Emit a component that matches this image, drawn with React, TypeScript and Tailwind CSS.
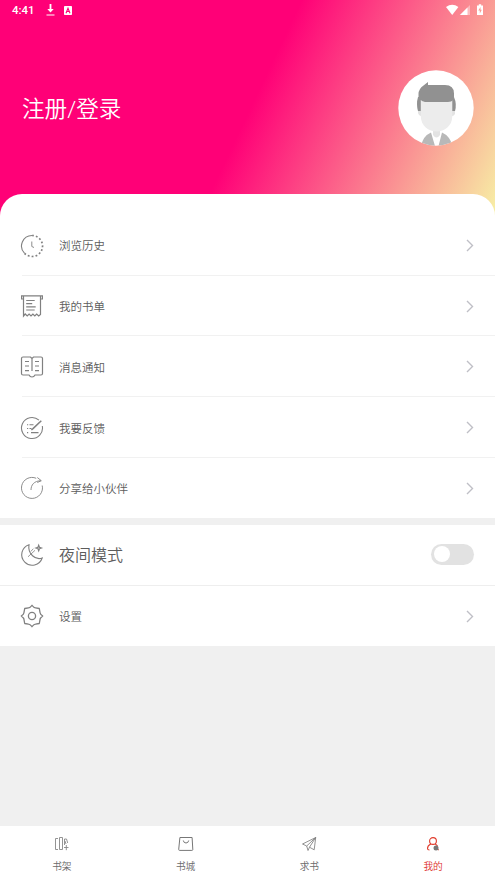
import React from 'react';

const iconProps = {
  width: 24,
  height: 24,
  viewBox: '0 0 24 24',
  fill: 'none',
  stroke: '#808080',
  strokeWidth: 1.1,
};

const HistoryIcon = () => (
  <svg {...iconProps}>
    <path d="M12 1.5A10.5 10.5 0 0 0 4.600 19.400" />
    <path d="M4.600 19.400A10.500 10.500 0 1 0 12 1.500" strokeWidth="1.700" strokeDasharray="1.800 2.100" />
    <path d="M11.800 7.500v5l2.200 1" strokeWidth="0.900" />
  </svg>
);

const ListIcon = () => (
  <svg {...iconProps} strokeWidth={1.2}>
    <path d="M3.500 5H1.600V1.800h20.800V5h-1.900M3.500 2v20l1.700-2 2 2 1.900-2 1.900 2 1.900-2 1.900 2 1.900-2 2 2 1.800-1.500V2" />
    <path d="M6.200 6.500h8.500M6.200 9.700h6M6.200 12.900h9.500M6.200 16h8.500" />
  </svg>
);

const BookIcon = () => (
  <svg {...iconProps} strokeWidth={1.2}>
    <path d="M12 3.500 10.500 2H3Q1.500 2 1.500 3.500v15Q1.500 20 3 20h6q1 2 3 2t3-2h6q1.500 0 1.500-1.500v-15Q22.500 2 21 2h-7.500zM12 3.500V16" />
    <path d="M5 6.500h4M5 11h4M5 15.700h4M15 6.500h4M15 11h4M15 15.700h4" />
  </svg>
);

const FeedbackIcon = () => (
  <svg {...iconProps}>
    <path d="M19 4.200A10.500 10.500 0 1 0 22.300 10" />
    <path d="M21.300 4.700 13 12.600l-1.600 1.400" strokeWidth="1.500" />
    <path d="M7 8.700h1.200M9.500 8.700h4M7 12.500h1.200M9.500 12.500h2M7 16.600h1.200M11 16.600h7.500" />
  </svg>
);

const ShareIcon = () => (
  <svg {...iconProps} strokeWidth={0.9}>
    <path d="M16.200 2.300A10.500 10.500 0 1 0 22.200 9.500" />
    <path d="M11 14C11 9 14 5 20.800 4.700M17.300 1.500l4 3.200-4 1.800" />
  </svg>
);

const MoonIcon = () => (
  <svg {...iconProps}>
    <path d="M9 1.700A10.500 10.500 0 1 0 22.200 15C15.500 17.500 7.500 11 9 1.700z" />
    <path d="m8 13.800 7-6.500M10.800 8.500l2.500-2.800" strokeWidth="0.800" />
    <path d="m18.700 2.400.7 1.900 1.900.7-1.900.7-.7 1.900-.7-1.900-1.900-.7 1.900-.7z" strokeWidth="1.300" />
  </svg>
);

const GearIcon = () => (
  <svg {...iconProps} strokeLinejoin="round" strokeWidth={1.3}>
    <path d="M12 1.300Q14 3.800 15.500 3.800L19.300 4.500 20 8.400Q20 10 22.700 12 20 14 20 15.600L19.300 19.500 15.500 20.200Q14 20.200 12 22.700 10 20.200 8.500 20.200L4.700 19.500 4 15.600Q4 14 1.300 12 4 10 4 8.400L4.700 4.500 8.500 3.800Q10 3.800 12 1.300z" />
    <circle cx="12" cy="12" r="3.600" />
  </svg>
);

const Chevron = () => (
  <svg className="ml-auto" width="8" height="13" viewBox="0 0 8 13" fill="none" stroke="#bfbfc6" strokeWidth="1.400">
    <path d="M1 1l5.500 5.500L1 12" />
  </svg>
);

const Avatar = () => (
  <svg width="76" height="76" viewBox="0 0 76 76">
    <clipPath id="avatar">
      <circle cx="38" cy="38" r="37.700" />
    </clipPath>
    <g clipPath="url(#avatar)">
      <rect width="76" height="76" fill="#fff" />
      <path d="M23 76Q25 66 33 62.500L37 76zM40.500 76 44 62.500Q52 66 54.500 76z" fill="#b8b8b8" />
      <path d="M35 60h7v5q-3.500 5-7 0z" fill="#e3e3e3" />
      <path d="M20 40h37v4q-1 2-3 2H23q-3-1-3-4z" fill="#e3e3e3" />
      <path d="M20 41q-2-7 0-14h36q3 7 1 14z" fill="#919191" />
      <path d="M22.800 30h31.500v16c0 20.500-31.500 20.500-31.500 0z" fill="#ececec" />
      <path d="M20.500 28V24q0-5 5-8.500l4.500-3.500v3h17q9 0 9 8.500v6q-3 2.500-6 2.500H27q-3 0-5-3z" fill="#919191" />
    </g>
  </svg>
);

const ShelfIcon = () => (
  <svg width="16" height="16" viewBox="0 0 16 16" fill="none" stroke="#888888" strokeWidth="0.900">
    <path d="M4 2.500H1.500v11H4M5.500 1.500h3v12h-3zM10.500 9V3h2l1.200 4M11 5l1 3M10 11.500h4.500M12.300 9V14.200" />
  </svg>
);

const StoreIcon = () => (
  <svg width="16" height="16" viewBox="0 0 16 16" fill="none" stroke="#777777" strokeWidth="1">
    <path d="M1.900 1.500h12.200l.7 12q0 .9-.9.9H1.600q-.9 0-.9-.9zM5.300 4.500q.4 2.500 2.700 2.500t2.700-2.500" />
  </svg>
);

const RequestIcon = () => (
  <svg width="16" height="16" viewBox="0 0 16 16" fill="none" stroke="#777777" strokeWidth="0.800" strokeLinejoin="round">
    <path d="M14.700 1.500 1.500 8l4.200 2L14.700 1.500l-1.500 12.300-4.700-2.600L14.700 1.500M5.700 10l1.300 4.500 1.500-3.300" />
  </svg>
);

const MineIcon = () => (
  <svg width="16" height="16" viewBox="0 0 16 16" fill="none" stroke="#e03a2b" strokeWidth="1.100">
    <circle cx="8" cy="5" r="3.400" />
    <path d="M5.800 8Q2.500 9.500 2.500 12.500q0 1.500 2 1.500M10.200 8q1.800.8 2.500 2.500M13 13.800h.9" />
    <circle cx="11" cy="12" r="2.500" fill="#777777" stroke="none" />
  </svg>
);

const MENU = [
  { label: '浏览历史', icon: <HistoryIcon /> },
  { label: '我的书单', icon: <ListIcon /> },
  { label: '消息通知', icon: <BookIcon /> },
  { label: '我要反馈', icon: <FeedbackIcon /> },
  { label: '分享给小伙伴', icon: <ShareIcon /> },
];

const TABS = [
  { label: '书架', icon: <ShelfIcon /> },
  { label: '书城', icon: <StoreIcon /> },
  { label: '求书', icon: <RequestIcon /> },
  { label: '我的', icon: <MineIcon />, active: true },
];

const StatusBar = () => (
  <div className="flex h-5 items-center pl-3 pr-[11px] text-white">
    <span className="w-[34px] font-[Roboto] text-[11.5px] font-medium leading-5">4:41</span>
    <svg width="9" height="12" viewBox="0 0 9 12" fill="none" stroke="#fff">
      <path d="M4.500 0v7" strokeWidth="1.800" />
      <path d="M1.300 5h6.400L4.500 8.600z" fill="#fff" stroke="none" />
      <path d="M.500 11h8" />
    </svg>
    <svg className="ml-[9px]" width="8" height="9" viewBox="0 0 8 9" fill="none">
      <rect width="8" height="9" rx="0.800" fill="#fff" />
      <path d="M2 7.200 4 2.300l2 4.900M3 5.500h2" stroke="#ff0077" strokeWidth="1.100" />
    </svg>
    <svg className="-mt-px ml-auto" width="38" height="12" viewBox="0 0 38 12" fill="#fff">
      <path d="M0 3Q6.200-1.600 12.400 3L6.200 11z" />
      <path d="M24 1v10H14z" opacity="0.400" />
      <path d="M21.500 3.500V11H14z" />
      <path d="M31 1.500h1.800V.3h2.400v1.200H37V11h-6z" />
      <path d="M34.500 3 32.300 6.500h1.500V9.500l2-3.700h-1.300z" fill="#f99a91" />
    </svg>
  </div>
);

const App: React.FC = () => {
  return (
    <div className="flex h-[880px] w-[495px] flex-col overflow-hidden bg-[#f0f0f0] font-['Roboto','Noto_Sans_CJK_SC',sans-serif] font-[350] text-[#5c5c5c]">
      <header className="h-[216px] shrink-0 bg-[linear-gradient(115.4deg,#ff0077_50.5%,#f7f0a5_100%)]">
        <StatusBar />
        <div className="mt-[49.5px] flex h-[76px] items-center justify-between pl-[22px] pr-[21px]">
          <h1 className="pt-[5px] text-[22.6px] leading-8 text-white">注册/登录</h1>
          <Avatar />
        </div>
      </header>

      <main className="flex-1">
        <section className="-mt-[22px] h-[324px] rounded-t-[22px] bg-white pt-[21px]">
          {MENU.map((item, i) => (
            <div key={item.label} className="flex h-[60.7px] pl-5">
              <div className="flex h-[61px] w-[39px] items-center">{item.icon}</div>
              <div className="flex flex-1 items-center pr-[21px] text-[11.5px]">
                <span className="pt-[3.5px]">{item.label}</span>
                <Chevron />
              </div>
              {i < MENU.length - 1 && <i className="-ml-[473px] w-[473px] self-end border-b border-[#f1f1f1]" />}
            </div>
          ))}
        </section>

        <section className="mt-[7px] bg-white">
          <div className="flex h-[61px] items-center border-b border-[#eeeeee] pl-5 pr-[21px] text-[16px]">
            <div className="w-[39px]"><MoonIcon /></div>
            <span className="pt-0.5">夜间模式</span>
            <button className="mb-0.5 ml-auto h-[21px] w-[43px] rounded-full bg-[#e2e2e2] p-[2.5px]">
              <span className="block size-4 rounded-full bg-white" />
            </button>
          </div>
          <div className="flex h-[60px] items-center pl-5 pr-[21px] text-[11.5px]">
            <div className="w-[39px]"><GearIcon /></div>
            <span className="pt-[3px]">设置</span>
            <Chevron />
          </div>
        </section>
      </main>

      <nav className="grid h-[54px] shrink-0 grid-cols-4 bg-white">
        {TABS.map((tab) => (
          <div key={tab.label} className={`flex flex-col items-center pt-2.5 text-[9.7px] leading-4 ${tab.active ? 'text-[#dd2c1e]' : 'text-[#6b6b6b]'}`}>
            {tab.icon}
            <span className="mt-[7px]">{tab.label}</span>
          </div>
        ))}
      </nav>
    </div>
  );
};

export default App;
